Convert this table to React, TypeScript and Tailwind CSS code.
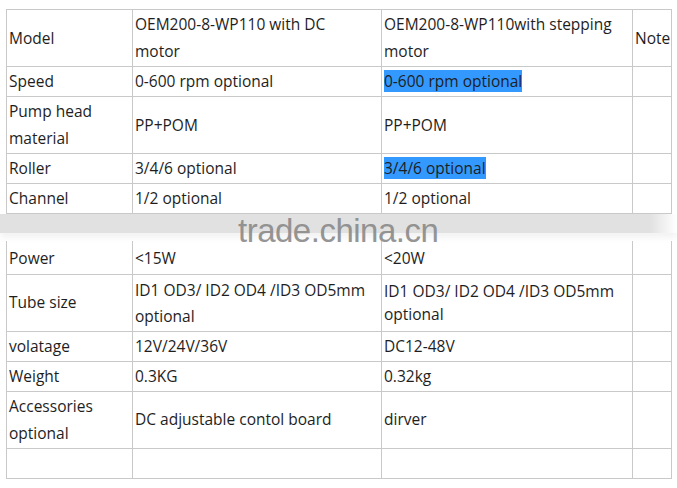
const cell = 'border border-[#c9c9c9] pl-[2px] align-middle';

function Mark({ children }: { children: React.ReactNode }) {
    return <span className="bg-[#3399ff]">{children}</span>;
}

export default function App() {
    return (
        <div className="w-[677px] h-[488px] bg-white relative overflow-hidden text-[15.5px] text-[#1e1e1e] font-['Open_Sans',sans-serif]">
            {/* upper half of the spec sheet */}
            <table className="ml-[6px] mt-[9px] border-collapse table-fixed w-[665px] leading-[27px]">
                <colgroup>
                    <col className="w-[126px]" />
                    <col className="w-[249px]" />
                    <col className="w-[251px]" />
                    <col className="w-[39px]" />
                </colgroup>
                <tbody>
                    <tr className="h-[57px]">
                        <td className={cell}>Model</td>
                        <td className={cell}>OEM200-8-WP110 with DC<br />motor</td>
                        <td className={cell}>OEM200-8-WP110with stepping motor</td>
                        <td className={cell}>Note</td>
                    </tr>
                    <tr className="h-[30px]">
                        <td className={cell}>Speed</td>
                        <td className={cell}>0-600 rpm optional</td>
                        <td className={cell}><Mark>0-600 rpm optional</Mark></td>
                        <td className={cell}></td>
                    </tr>
                    <tr className="h-[57px]">
                        <td className={cell}>Pump head material</td>
                        <td className={cell}>PP+POM</td>
                        <td className={cell}>PP+POM</td>
                        <td className={cell}></td>
                    </tr>
                    <tr className="h-[30px]">
                        <td className={cell}>Roller</td>
                        <td className={cell}>3/4/6 optional</td>
                        <td className={cell}><Mark>3/4/6 optional</Mark></td>
                        <td className={cell}></td>
                    </tr>
                    <tr className="h-[30px]">
                        <td className={cell}>Channel</td>
                        <td className={cell}>1/2 optional</td>
                        <td className={cell}>1/2 optional</td>
                        <td className={cell}></td>
                    </tr>
                </tbody>
            </table>

            {/* page-break band */}
            <div className="h-[19px] w-[677px] bg-gradient-to-r from-[#e1e1e1] via-[#e1e1e1] via-[96%] to-transparent shadow-[0_5px_6px_rgba(0,0,0,0.05)]" />

            {/* lower half */}
            <table className="ml-[6px] mt-[8px] border-collapse table-fixed w-[665px] leading-[27px]">
                <colgroup>
                    <col className="w-[126px]" />
                    <col className="w-[249px]" />
                    <col className="w-[251px]" />
                    <col className="w-[39px]" />
                </colgroup>
                <tbody className="[&_tr:first-child_td]:border-t-0">
                    <tr className="h-[33px]">
                        <td className={cell + ' pt-[3px]'}>Power</td>
                        <td className={cell + ' pt-[3px]'}>&lt;15W</td>
                        <td className={cell + ' pt-[3px]'}>&lt;20W</td>
                        <td className={cell}></td>
                    </tr>
                    <tr className="h-[57px]">
                        <td className={cell}>Tube size</td>
                        <td className={cell + ' leading-[26px]'}>ID1 OD3/ ID2 OD4 /ID3 OD5mm optional</td>
                        <td className={cell + ' leading-[23px]'}>ID1 OD3/ ID2 OD4 /ID3 OD5mm optional</td>
                        <td className={cell}></td>
                    </tr>
                    <tr className="h-[30px]">
                        <td className={cell}>volatage</td>
                        <td className={cell}>12V/24V/36V</td>
                        <td className={cell}>DC12-48V</td>
                        <td className={cell}></td>
                    </tr>
                    <tr className="h-[30px]">
                        <td className={cell}>Weight</td>
                        <td className={cell}>0.3KG</td>
                        <td className={cell}>0.32kg</td>
                        <td className={cell}></td>
                    </tr>
                    <tr className="h-[57px]">
                        <td className={cell}>Accessories optional</td>
                        <td className={cell}>DC adjustable contol board</td>
                        <td className={cell}>dirver</td>
                        <td className={cell}></td>
                    </tr>
                    <tr className="h-[30px]">
                        <td className={cell}></td>
                        <td className={cell}></td>
                        <td className={cell}></td>
                        <td className={cell}></td>
                    </tr>
                </tbody>
            </table>

            {/* watermark */}
            <div className="absolute left-[238px] top-[209px] text-[33px] leading-[44px] text-[#8a8a8a] opacity-90 font-['Liberation_Sans',Arial,sans-serif] tracking-[-0.5px] pointer-events-none">
                trade.china.cn
            </div>
        </div>
    );
}
